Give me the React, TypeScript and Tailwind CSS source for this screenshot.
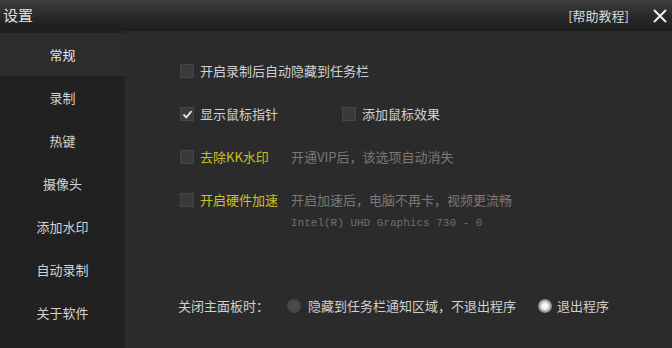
import type { ReactNode } from "react";

const font = { fontFamily: "'Noto Sans CJK SC', 'Noto Sans', sans-serif" };

const navItems = ["常规", "录制", "热键", "摄像头", "添加水印", "自动录制", "关于软件"];

function Checkbox({ checked = false }: { checked?: boolean }) {
  return (
    <span className="flex h-[14px] w-[14px] shrink-0 items-center justify-center border border-[#464646] bg-[#3a3a3a]">
      {checked && (
        <svg width="11" height="11" viewBox="0 0 11 11">
          <path d="M1.5 5.5 L4.3 8.3 L9.5 2.2" fill="none" stroke="#eadfe2" strokeWidth="1.8" />
        </svg>
      )}
    </span>
  );
}

function Radio({ checked = false }: { checked?: boolean }) {
  return checked ? (
    <span className="h-[14px] w-[14px] shrink-0 rounded-full bg-[radial-gradient(circle,#ffffff_0%,#f2f2f2_30%,#8a8a8a_65%,#3a3a3a_100%)]" />
  ) : (
    <span className="h-[14px] w-[14px] shrink-0 rounded-full bg-[radial-gradient(circle,#4e4e4e_0%,#474747_60%,#3a3a3a_100%)]" />
  );
}

function Option({ checked, children }: { checked?: boolean; children: ReactNode }) {
  return (
    <div className="flex items-center gap-[6px]">
      <Checkbox checked={checked} />
      {children}
    </div>
  );
}

export default function App() {
  return (
    <div className="flex h-[348px] w-[672px] flex-col overflow-hidden bg-[#2b2b2b] text-[13px] text-[#d0d0d0]" style={font}>
      {/* title bar */}
      <div className="flex h-[31px] shrink-0 items-center bg-[linear-gradient(to_bottom,#3e3e3e,#262626_60%,#1d1d1d)] pl-[3px] pr-[4px]">
        <span className="text-[15px] text-[#e0e0e0]">设置</span>
        <span className="ml-auto text-[13px] text-[#d8d8d8]">[帮助教程]</span>
        <svg className="ml-[23px]" width="16" height="16" viewBox="0 0 16 16">
          <path d="M2 2 L14 14 M14 2 L2 14" stroke="#f2f2f2" strokeWidth="2" />
        </svg>
      </div>

      <div className="flex flex-1">
        {/* sidebar */}
        <div className="flex w-[125px] shrink-0 flex-col bg-[#212121] pt-[2px]">
          {navItems.map((item, i) => (
            <div
              key={item}
              className={`flex h-[43px] items-center justify-center ${i === 0 ? "bg-[#2c2c2c] text-[#e8e8e8]" : "text-[#d4d4d4]"}`}
            >
              {item}
            </div>
          ))}
        </div>

        {/* content */}
        <div className="flex flex-1 flex-col pl-[55px] pt-[30px] pb-[32px]">
          <div className="flex flex-col gap-[23px]">
            <div className="flex h-[20px] items-center">
              <Option>开启录制后自动隐藏到任务栏</Option>
            </div>
            <div className="flex h-[20px] items-center">
              <Option checked>显示鼠标指针</Option>
              <div className="ml-[64px]">
                <Option>添加鼠标效果</Option>
              </div>
            </div>
            <div className="flex h-[20px] items-center">
              <Option>
                <span className="w-[91px] text-[#c9c022]">去除KK水印</span>
              </Option>
              <span className="text-[#797979]">开通VIP后，该选项自动消失</span>
            </div>
            <div className="flex flex-col">
              <div className="flex h-[20px] items-center">
                <Option>
                  <span className="w-[91px] text-[#c9c022]">开启硬件加速</span>
                </Option>
                <span className="text-[#797979]">开启加速后，电脑不再卡，视频更流畅</span>
              </div>
              <div
                className="ml-[111px] mt-[6px] text-[11px] leading-[14px] text-[#6e6e6e]"
                style={{ fontFamily: "'Liberation Mono', monospace" }}
              >
                Intel(R) UHD Graphics 730 - 0
              </div>
            </div>
          </div>

          <div className="mt-auto flex h-[20px] items-center">
            <span className="w-[109px] -ml-[2px]">关闭主面板时：</span>
            <div className="flex items-center gap-[7px]">
              <Radio />
              <span>隐藏到任务栏通知区域，不退出程序</span>
            </div>
            <div className="ml-[22px] flex items-center gap-[5px]">
              <Radio checked />
              <span>退出程序</span>
            </div>
          </div>
        </div>
      </div>
    </div>
  );
}
